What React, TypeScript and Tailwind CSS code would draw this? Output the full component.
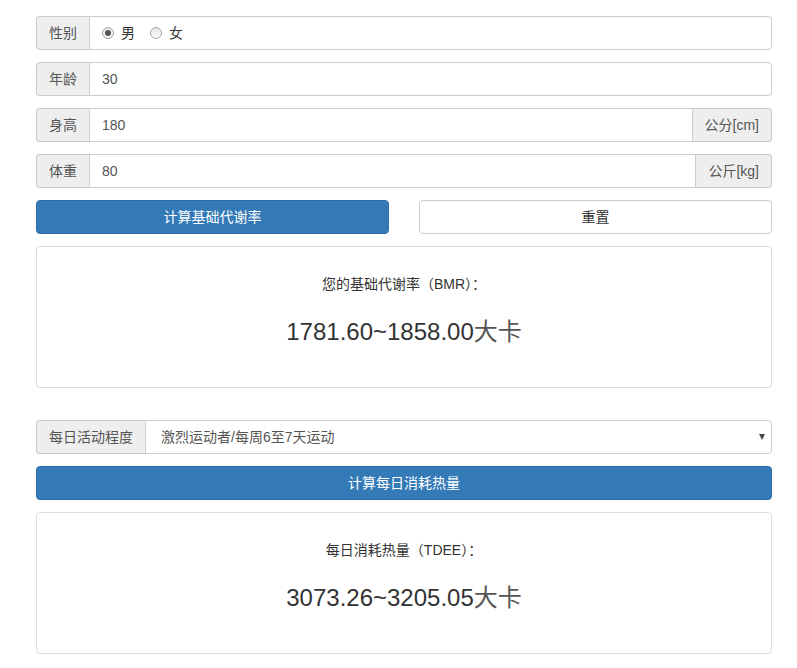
import { useState } from "react";

const font = "font-['Liberation_Sans','Noto_Sans_CJK_SC',sans-serif]";

function Addon({ children, side }: { children: React.ReactNode; side: "left" | "right" }) {
  return (
    <span
      className={`flex items-center whitespace-nowrap border border-[#ccc] bg-[#eee] px-3 text-sm text-[#555] ${
        side === "left" ? "rounded-l border-r-0" : "rounded-r border-l-0"
      }`}
    >
      {children}
    </span>
  );
}

function Radio({ checked, label, onClick }: { checked: boolean; label: string; onClick: () => void }) {
  return (
    <label className="flex cursor-pointer items-center gap-[7px]" onClick={onClick}>
      <span className="flex h-[12px] w-[12px] items-center justify-center rounded-full border border-[#a6a6a6] bg-gradient-to-b from-[#e6e6e6] to-[#fafafa]">
        {checked && <span className="h-[6px] w-[6px] rounded-full bg-[#555]" />}
      </span>
      <span className="text-sm text-[#333]">{label}</span>
    </label>
  );
}

function ResultBox({ title, value }: { title: string; value: string }) {
  return (
    <div className="flex h-[142px] flex-col items-center rounded border border-[#ddd] bg-white pt-[27px]">
      <p className="text-sm leading-5 text-[#333]">{title}</p>
      <p className="mt-[25px] text-[24px] leading-[26px] text-[#333]">
        {value}
        <span className="text-[#555]">大卡</span>
      </p>
    </div>
  );
}

export default function App() {
  const [sex, setSex] = useState<"m" | "f">("m");

  return (
    <div className={`${font} min-h-[668px] w-full bg-white pl-[36px] pr-[25px] pt-4 text-[#333]`}>
      <div className="flex flex-col gap-3">
        {/* 性别 */}
        <div className="flex h-[34px]">
          <Addon side="left">性别</Addon>
          <div className="flex flex-1 items-center gap-[15px] rounded-r border border-[#ccc] px-3">
            <Radio checked={sex === "m"} label="男" onClick={() => setSex("m")} />
            <Radio checked={sex === "f"} label="女" onClick={() => setSex("f")} />
          </div>
        </div>

        {/* 年龄 */}
        <div className="flex h-[34px]">
          <Addon side="left">年龄</Addon>
          <input
            defaultValue="30"
            className="min-w-0 flex-1 rounded-r border border-[#ccc] px-3 text-sm text-[#555] outline-none"
          />
        </div>

        {/* 身高 */}
        <div className="flex h-[34px]">
          <Addon side="left">身高</Addon>
          <input
            defaultValue="180"
            className="min-w-0 flex-1 border border-[#ccc] px-3 text-sm text-[#555] outline-none"
          />
          <Addon side="right">公分[cm]</Addon>
        </div>

        {/* 体重 */}
        <div className="flex h-[34px]">
          <Addon side="left">体重</Addon>
          <input
            defaultValue="80"
            className="min-w-0 flex-1 border border-[#ccc] px-3 text-sm text-[#555] outline-none"
          />
          <Addon side="right">公斤[kg]</Addon>
        </div>

        {/* Buttons */}
        <div className="grid h-[34px] grid-cols-2 gap-[30px]">
          <button className="rounded border border-[#2e6da4] bg-[#337ab7] text-sm text-white">
            计算基础代谢率
          </button>
          <button className="rounded border border-[#ccc] bg-white text-sm text-[#333]">重置</button>
        </div>

        <ResultBox title="您的基础代谢率（BMR）：" value="1781.60~1858.00" />
      </div>

      <div className="mt-[32px] flex flex-col gap-3">
        {/* 每日活动程度 */}
        <div className="flex h-[34px]">
          <Addon side="left">每日活动程度</Addon>
          <div className="relative flex flex-1 items-center rounded-r border border-[#ccc] pl-[15px] text-sm text-[#555]">
            激烈运动者/每周6至7天运动
            <span className="absolute right-[6px] top-1/2 -translate-y-1/2 border-x-[3.5px] border-t-[6px] border-x-transparent border-t-[#444]" />
          </div>
        </div>

        <button className="h-[34px] rounded border border-[#2e6da4] bg-[#337ab7] text-sm text-white">
          计算每日消耗热量
        </button>

        <ResultBox title="每日消耗热量（TDEE）：" value="3073.26~3205.05" />
      </div>
    </div>
  );
}
